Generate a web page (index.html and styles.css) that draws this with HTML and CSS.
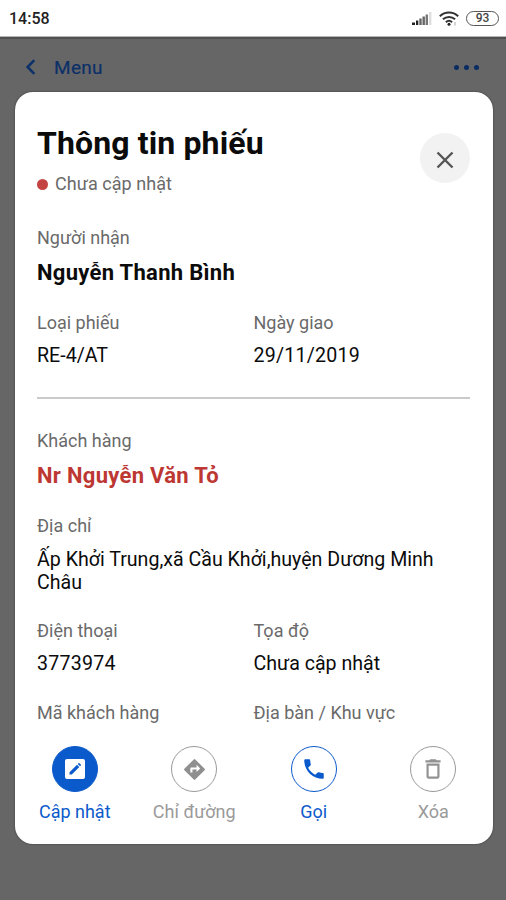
FILE: index.html
```html
<!DOCTYPE html>
<html lang="vi">
<head>
<meta charset="utf-8">
<meta name="viewport" content="width=device-width, initial-scale=1">
<title>Thông tin phiếu</title>
<link rel="stylesheet" href="styles.css">
</head>
<body>
<header class="status">
  <span class="clock">14:58</span>
  <div class="indicators">
    <svg class="signal" width="20" height="14" viewBox="0 0 20 14"><path fill="#222" d="M0 11.500h3V14H0zM4 9.500h2.300V14H4z"/><path fill="#666" d="M7.300 7.500h2.400V14H7.300zM10.500 5.500h2.400V14h-2.400z"/><path fill="#777" d="M13.600 3.500H16V14h-2.400z"/><path fill="#dedede" d="M17 1h2.400v13H17z"/></svg>
    <svg class="wifi" width="20" height="15" viewBox="0 0 20 15"><g fill="none" stroke="#333" stroke-width="2"><path d="M.8 5.200c5.200-4.900 13.200-4.900 18.400 0"/><path d="M3.900 8.300c3.500-3.200 8.700-3.200 12.200 0"/><path d="M6.900 11.200c1.800-1.600 4.400-1.600 6.200 0"/></g><circle cx="10" cy="13.300" r="1.500" fill="#222"/><path stroke="#aaa" d="M16 11v3.500"/></svg>
    <span class="battery">93</span>
  </div>
</header>
<nav class="nav">
  <svg width="12" height="16" viewBox="0 0 12 16"><path d="M9.300 1.200 2.600 8l6.700 6.800" fill="none" stroke="#0c3068" stroke-width="2.500"/></svg>
  <span class="back">Menu</span>
  <div class="more"><i></i><i></i><i></i></div>
</nav>
<main class="sheet">
  <div class="head">
    <div>
      <h1 class="title">Thông tin phiếu</h1>
      <p class="state"><i class="dot"></i>Chưa cập nhật</p>
    </div>
    <button class="close" aria-label="Đóng"><svg width="18" height="18" viewBox="0 0 18 18"><path d="m1.500 1.500 15 15m0-15-15 15" stroke="#555" stroke-width="2.400"/></svg></button>
  </div>
  <section class="fields">
    <div class="field wide"><p class="label">Người nhận</p><p class="name">Nguyễn Thanh Bình</p></div>
    <div class="field"><p class="label">Loại phiếu</p><p class="value">RE-4/AT</p></div>
    <div class="field"><p class="label">Ngày giao</p><p class="value number">29/11/2019</p></div>
  </section>
  <hr class="rule">
  <section class="fields">
    <div class="field wide"><p class="label">Khách hàng</p><p class="name red">Nr Nguyễn Văn Tỏ</p></div>
    <div class="field wide"><p class="label">Địa chỉ</p><p class="value address">Ấp Khởi Trung,xã Cầu Khởi,huyện Dương Minh Châu</p></div>
    <div class="field"><p class="label">Điện thoại</p><p class="value number">3773974</p></div>
    <div class="field"><p class="label">Tọa độ</p><p class="value">Chưa cập nhật</p></div>
    <div class="field"><p class="label">Mã khách hàng</p></div>
    <div class="field"><p class="label">Địa bàn / Khu vực</p></div>
  </section>
  <footer class="actions">
    <div class="action primary"><span class="ring"><svg width="20" height="20" viewBox="0 0 20 20"><rect width="20" height="20" rx="2" fill="#fff"/><path fill="#0b5acb" d="M4.500 15.500v-2.300l7.500-7.500 2.300 2.300-7.500 7.500zM12.700 5l.8-.8c.3-.3.6-.3.9 0l1.400 1.400c.3.300.3.600 0 .9l-.8.800z"/></svg></span><span>Cập nhật</span></div>
    <div class="action muted"><span class="ring"><svg width="25" height="25" viewBox="0 0 24 24"><path fill="#8f8f8f" d="m21.700 11.300-9-9a1 1 0 0 0-1.400 0l-9 9a1 1 0 0 0 0 1.400l9 9a1 1 0 0 0 1.400 0l9-9a1 1 0 0 0 0-1.400zM14 14.500V12h-4v3H8v-4c0-.6.400-1 1-1h5V7.500l3.500 3.500z"/></svg></span><span>Chỉ đường</span></div>
    <div class="action"><span class="ring"><svg width="26" height="26" viewBox="0 0 24 24"><path fill="#0b5acb" d="M6.600 10.800c1.400 2.800 3.800 5.100 6.600 6.600l2.200-2.200c.3-.3.700-.4 1-.2 1.100.4 2.300.6 3.600.6.600 0 1 .4 1 1V20c0 .6-.4 1-1 1C10.600 21 3 13.400 3 4c0-.6.5-1 1-1h3.500c.6 0 1 .4 1 1 0 1.300.2 2.500.6 3.600.1.400 0 .7-.2 1z"/></svg></span><span>Gọi</span></div>
    <div class="action muted"><span class="ring"><svg width="26" height="26" viewBox="0 0 24 24"><path fill="#929292" d="M6 19c0 1.100.9 2 2 2h8c1.100 0 2-.9 2-2V7H6zM8 9h8v10H8zM15.500 4l-1-1h-5l-1 1H5v2h14V4z"/></svg></span><span>Xóa</span></div>
  </footer>
</main>
</body>
</html>
```

FILE: styles.css
```css
* { box-sizing: border-box; }
body {
  margin: 0;
  width: 506px;
  height: 900px;
  overflow: hidden;
  background: #666;
  color: #0b0b0b;
  font-family: Roboto, "Noto Sans", sans-serif;
}
p, h1 { margin: 0; }
svg { display: block; }
.status {
  height: 37px;
  padding: 0 7px 0 9px;
  display: flex;
  align-items: center;
  justify-content: space-between;
  background: #fff;
  border-bottom: 1px solid #b5b5b5;
}
.clock { font-size: 16px; font-weight: 500; color: #222; }
.indicators { display: flex; align-items: center; gap: 7px; }
.battery {
  width: 33px;
  height: 15px;
  border: 1.5px solid #555;
  border-radius: 8px;
  font-size: 12px;
  line-height: 13px;
  font-weight: 500;
  text-align: center;
  color: #444;
}
.nav {
  height: 55px;
  padding: 3px 27px 0 25px;
  display: flex;
  align-items: center;
  border-top: 2px solid #505050;
  color: #0c3068;
}
.back { margin-left: 17px; font-size: 19px; letter-spacing: .3px; -webkit-text-stroke: .2px; }
.more { margin-left: auto; display: flex; gap: 5px; }
.more i { width: 5px; height: 5px; border-radius: 50%; background: #0a2c63; }
.sheet {
  width: 478px;
  height: 752px;
  margin-left: 15px;
  padding: 32px 23px 0 22px;
  display: flex;
  flex-direction: column;
  background: #fff;
  border-radius: 18px;
  box-shadow: 0 0 2px #333;
}
.head { height: 102px; display: flex; justify-content: space-between; }
.title { font-size: 32px; line-height: 38px; font-weight: 700; letter-spacing: .13px; }
.state {
  display: flex;
  align-items: center;
  gap: 7px;
  margin-top: 10px;
  font-size: 18px;
  line-height: 24px;
  letter-spacing: .05px;
  color: #6a6a6a;
}
.dot { width: 11px; height: 11px; border-radius: 50%; background: #c44343; }
.close {
  width: 50px;
  height: 50px;
  margin-top: 9px;
  padding: 3px 0 0;
  border: 0;
  border-radius: 50%;
  display: grid;
  place-items: center;
  background: #f2f2f2;
}
.fields { display: grid; grid-template-columns: 1fr 1fr; row-gap: 25px; }
.wide { grid-column: span 2; }
.label { font-size: 18px; line-height: 24px; color: #6a6a6a; }
.value { margin-top: 9px; font-size: 19.6px; line-height: 24px; }
.number { letter-spacing: .22px; }
.address { margin-top: 10px; line-height: 23px; }
.name { margin-top: 10px; font-size: 22px; line-height: 26px; font-weight: 700; letter-spacing: .3px; }
.red { color: #bd3733; }
.rule { width: 100%; height: 2px; margin: 29px 0 30px; border: 0; background: #cacaca; }
.actions {
  margin: auto -23px 20px -22px;
  display: grid;
  grid-template-columns: repeat(4, 1fr);
}
.action {
  display: flex;
  flex-direction: column;
  align-items: center;
  gap: 8px;
  font-size: 18px;
  line-height: 24px;
  color: #0b5acb;
}
.ring {
  width: 46px;
  height: 46px;
  display: grid;
  place-items: center;
  border: 1.5px solid currentColor;
  border-radius: 50%;
}
.primary .ring { background: #0b5acb; }
.muted { color: #9a9a9a; }
```
